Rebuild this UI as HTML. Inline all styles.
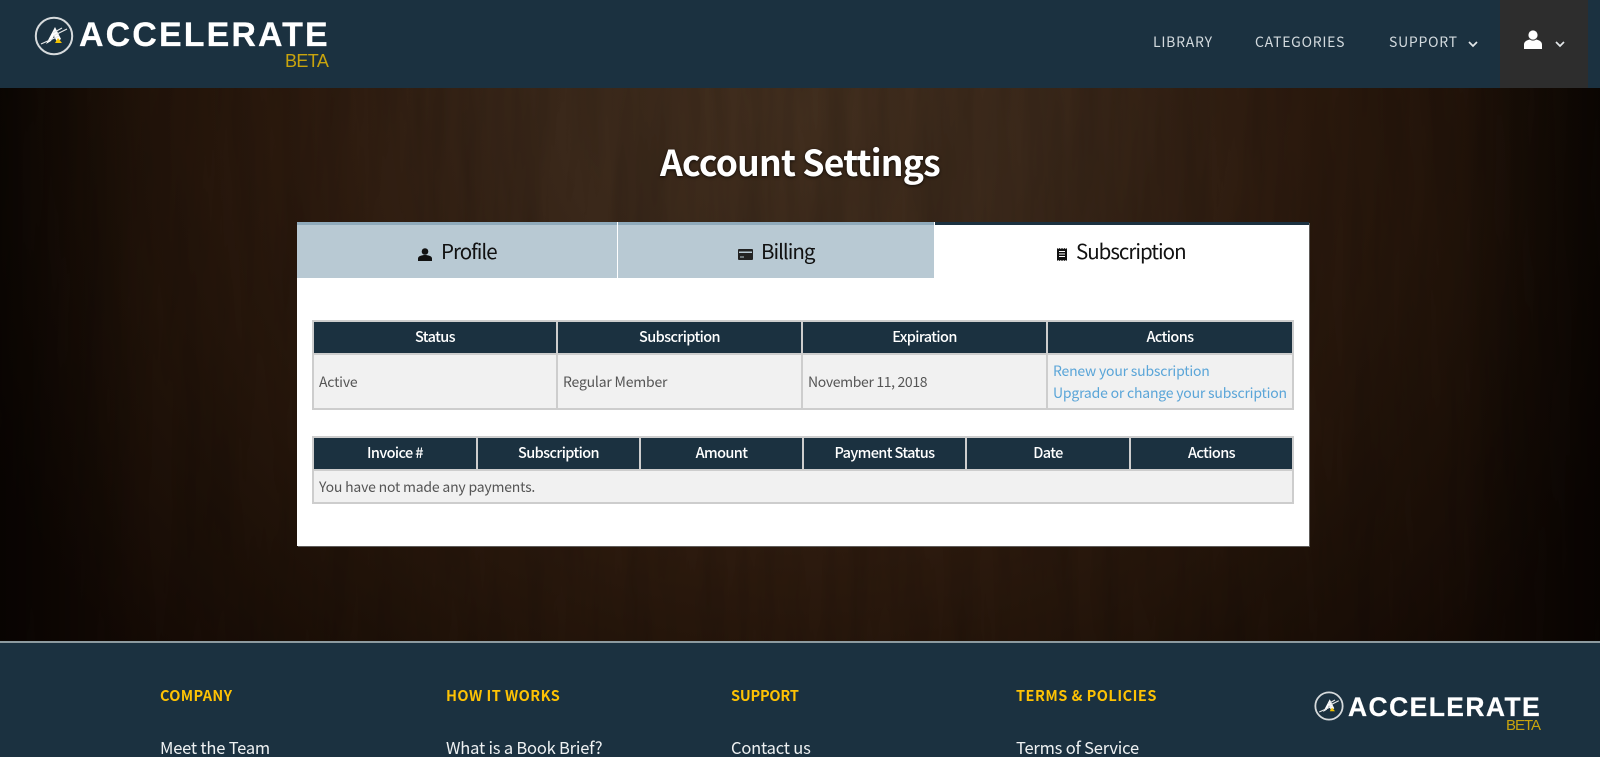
<!DOCTYPE html>
<html lang="en">
<head>
<meta charset="utf-8">
<title>Account Settings</title>
<style>
*{box-sizing:border-box}
html,body{margin:0;padding:0;width:1600px;height:757px;overflow:hidden;background:#1b3140}
body{position:relative;font-family:"Noto Sans CJK JP","Liberation Sans",sans-serif}
a{color:inherit;text-decoration:none}
.t{position:absolute;white-space:nowrap;display:block}
#hdr{position:absolute;left:0;top:0;width:1600px;height:88px;background:#1b3140}
#usr{position:absolute;left:1500px;top:0;width:88px;height:88px;background:#2d2d2d}
.nav{top:32px;line-height:20px;font-size:14px;letter-spacing:.74px;color:#d3dade}
#wood{position:absolute;left:0;top:88px;width:1600px;height:553px;background:linear-gradient(to right,rgba(0,0,0,.55),rgba(0,0,0,0) 9%,rgba(0,0,0,0) 91%,rgba(0,0,0,.55)),radial-gradient(ellipse 900px 820px at 50% 4%,#412e1e 0%,#3a281a 26%,#2c1a0e 55%,#1e1108 80%,#140a05 100%)}
#wood svg{position:absolute;left:0;top:0}
h1{position:absolute;left:660px;top:137px;margin:0;font-size:35.5px;line-height:50px;font-weight:700;color:#fff;white-space:nowrap;letter-spacing:-.78px;text-shadow:0 1px 3px rgba(0,0,0,.7)}
#card{position:absolute;left:297px;top:222px;width:1012px;height:324px;background:#fff;box-shadow:1px 1px 0 rgba(110,110,110,.8)}
.tab{position:absolute;top:0;height:56px;background:#b8c9d3;border-top:3px solid #8faabb}
.lbl{font-size:20.5px;line-height:30px;color:#111;font-weight:400;top:235px;letter-spacing:-1px}
table{position:absolute;border-collapse:collapse;table-layout:fixed;background:#f1f1f1}
th,td{border:2px solid #cdcdcd;padding:0 5px;overflow:hidden;white-space:nowrap}
th{background:#1b3140;color:#fff;font-size:14.5px;font-weight:500;text-align:center;letter-spacing:-.6px;padding-bottom:2px}
td{color:#555;font-size:14px;font-weight:400;letter-spacing:-.2px}
td a{display:block;color:#5aa5d8;line-height:22px}
#ftr{position:absolute;left:0;top:641px;width:1600px;height:116px;background:#1b3140;border-top:2px solid #8d9a9f}
.fh{top:686px;line-height:20px;font-size:14.5px;font-weight:700;color:#fdc204}
.fl{top:735px;line-height:24px;font-size:16.5px;color:#eef1f2;font-weight:400;letter-spacing:-.2px}
.lg{font-family:"Liberation Sans",sans-serif;font-weight:700;color:#fff;-webkit-text-stroke:.2px #fff}
.bt{font-family:"Liberation Sans",sans-serif;color:#c9a40d}
</style>
</head>
<body>
<header id="hdr">
  <svg class="t" style="left:34px;top:16px" width="40" height="40" viewBox="0 0 40 40"><circle cx="20" cy="20" r="18.2" fill="none" stroke="#d6dadc" stroke-width="2"/><path d="M21 11 L12 28 L17 25 L20 20 L23 26 L27 23 Z" fill="#fff"/><path d="M33 13 L19 20 M28 12 L19 17 M25 20 L7 28" stroke="#e6e8e9" stroke-width="1.2" fill="none"/><path d="M24 22 L28 27 L21 27 Z" fill="#f2c200"/></svg>
  <span class="t lg" style="left:79px;top:15px;font-size:34px;line-height:40px;letter-spacing:2.1px">ACCELERATE</span>
  <span class="t bt" style="left:285px;top:51px;font-size:18px;line-height:20px;letter-spacing:-.6px">BETA</span>
  <a class="t nav" href="#" style="left:1153px">LIBRARY</a>
  <a class="t nav" href="#" style="left:1255px">CATEGORIES</a>
  <a class="t nav" href="#" style="left:1389px">SUPPORT</a>
  <svg class="t" style="left:1468px;top:40px" width="10" height="8" viewBox="0 0 10 8"><path d="M1 2 L5 6 L9 2" fill="none" stroke="#e3e7e9" stroke-width="1.7"/></svg>
  <div id="usr"></div>
  <svg class="t" style="left:1524px;top:30px" width="18" height="19" viewBox="0 0 18 19"><circle cx="9" cy="5" r="4.6" fill="#fff"/><path d="M0 19 V14.5 C0 11.5 3 10 6 9.5 C7.500 11 10.500 11 12 9.500 C15 10 18 11.500 18 14.500 V19 Z" fill="#fff"/></svg>
  <svg class="t" style="left:1555px;top:40px" width="10" height="8" viewBox="0 0 10 8"><path d="M1 2 L5 6 L9 2" fill="none" stroke="#e3e7e9" stroke-width="1.7"/></svg>
</header>

<div id="wood">
  <svg width="1600" height="553"><filter id="w" x="0" y="0" width="100%" height="100%"><feTurbulence type="fractalNoise" baseFrequency="0.04 0.004" numOctaves="4" seed="11"/><feColorMatrix type="matrix" values="0 0 0 0 0  0 0 0 0 0  0 0 0 0 0  1.5 0 0 0 -0.5"/></filter><rect width="1600" height="553" filter="url(#w)" opacity=".14"/></svg>
</div>

<h1>Account Settings</h1>

<div id="card">
  <div class="tab" style="left:0;width:320px"></div>
  <div class="tab" style="left:321px;width:316px"></div>
  <div style="position:absolute;left:638px;top:0;width:374px;height:3px;background:#1b3140"></div>
  <table style="left:15px;top:98px;width:980px">
    <colgroup><col style="width:244px"><col style="width:245px"><col style="width:245px"><col style="width:246px"></colgroup>
    <tr style="height:33px"><th>Status</th><th>Subscription</th><th>Expiration</th><th>Actions</th></tr>
    <tr style="height:55px"><td>Active</td><td>Regular Member</td><td style="letter-spacing:-.35px">November 11, 2018</td><td><a href="#">Renew your subscription</a><a href="#">Upgrade or change your subscription</a></td></tr>
  </table>
  <table style="left:15px;top:214px;width:980px">
    <colgroup><col style="width:164px"><col style="width:163px"><col style="width:163px"><col style="width:163px"><col style="width:164px"><col style="width:163px"></colgroup>
    <tr style="height:33px"><th>Invoice #</th><th>Subscription</th><th>Amount</th><th>Payment Status</th><th>Date</th><th>Actions</th></tr>
    <tr style="height:33px"><td colspan="6">You have not made any payments.</td></tr>
  </table>
</div>

<svg class="t" style="left:418px;top:248px" width="14" height="13" viewBox="0 0 14 13"><circle cx="7" cy="3.500" r="3.300" fill="#111"/><path d="M0 13 V10.500 C0 8 4 7 7 7 C10 7 14 8 14 10.500 V13 Z" fill="#111"/></svg>
<a class="t lbl" href="#" style="left:441px">Profile</a>
<svg class="t" style="left:738px;top:249px" width="15" height="11" viewBox="0 0 15 11"><rect width="15" height="11" rx="1" fill="#222"/><rect x="1" y="2.500" width="13" height="1.500" fill="#b8c9d3"/><rect x="2" y="7.500" width="4" height="1" fill="#b8c9d3"/></svg>
<a class="t lbl" href="#" style="left:761px">Billing</a>
<svg class="t" style="left:1057px;top:248px" width="10" height="13" viewBox="0 0 10 13"><path d="M0 0 L1.250 1 L2.500 0 L3.750 1 L5 0 L6.250 1 L7.500 0 L8.750 1 L10 0 V13 L8.750 12 L7.500 13 L6.250 12 L5 13 L3.750 12 L2.500 13 L1.250 12 L0 13 Z" fill="#111"/><path d="M2 3.500 H8 M2 6 H8 M2 8.500 H8" stroke="#fff" stroke-width=".9"/></svg>
<a class="t lbl" href="#" style="left:1076px">Subscription</a>

<footer id="ftr"></footer>
<span class="t fh" style="left:160px;letter-spacing:.35px">COMPANY</span>
<span class="t fh" style="left:446px;letter-spacing:.45px">HOW IT WORKS</span>
<span class="t fh" style="left:731px;letter-spacing:-.2px">SUPPORT</span>
<span class="t fh" style="left:1016px;letter-spacing:.5px">TERMS &amp; POLICIES</span>
<a class="t fl" href="#" style="left:160px">Meet the Team</a>
<a class="t fl" href="#" style="left:446px">What is a Book Brief?</a>
<a class="t fl" href="#" style="left:731px">Contact us</a>
<a class="t fl" href="#" style="left:1016px">Terms of Service</a>

<svg class="t" style="left:1314px;top:691px" width="30" height="30" viewBox="0 0 40 40"><circle cx="20" cy="20" r="18.200" fill="none" stroke="#d6dadc" stroke-width="2.400"/><path d="M21 11 L12 28 L17 25 L20 20 L23 26 L27 23 Z" fill="#fff"/><path d="M33 13 L19 20 M28 12 L19 17 M25 20 L7 28" stroke="#e6e8e9" stroke-width="1.400" fill="none"/><path d="M24 22 L28 27 L21 27 Z" fill="#f2c200"/></svg>
<span class="t lg" style="left:1348px;top:691px;font-size:26.500px;line-height:32px;letter-spacing:1.4px">ACCELERATE</span>
<span class="t bt" style="left:1506px;top:717px;font-size:15px;line-height:17px;letter-spacing:-1px">BETA</span>
</body>
</html>
